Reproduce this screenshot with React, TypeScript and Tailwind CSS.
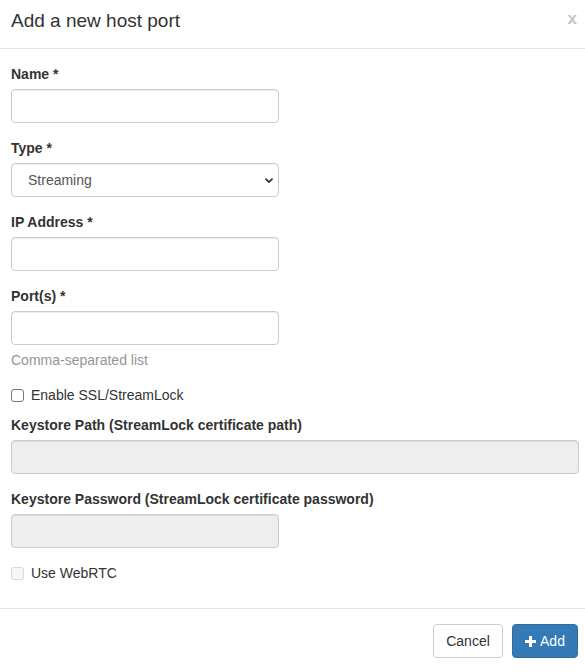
import React from 'react'

const inputBase =
  'block h-[34px] rounded-[4px] border border-[#ccc] px-3 text-[14px] text-[#555] shadow-[inset_0_1px_1px_rgba(0,0,0,0.075)] outline-none'

const Label = ({ children }: { children: React.ReactNode }) => (
  <label className="mb-[5px] block text-[14px] font-bold leading-[20px] text-[#333]">{children}</label>
)

const Check = ({ label, disabled }: { label: string; disabled?: boolean }) => (
  <div className="my-[10px] flex h-[20px] items-center">
    <span
      className={`mr-[7px] inline-block h-[13px] w-[13px] rounded-[3px] border ${
        disabled ? 'border-[#d9d9d9] bg-[#f7f7f7]' : 'border-[#767676] bg-white'
      }`}
    />
    <span className="text-[14px] leading-[20px] text-[#333]">{label}</span>
  </div>
)

const App = () => {
  return (
    <div
      className="h-[672px] w-[585px] overflow-hidden bg-white text-[#333]"
      style={{ fontFamily: '"Liberation Sans", Arial, sans-serif' }}
    >
      {/* header */}
      <div className="flex items-start justify-between border-b border-[#e5e5e5] pb-[14px] pl-[11px] pr-[8px] pt-[8px]">
        <h4 className="text-[19px] font-normal leading-[26px] text-[#333]">Add a new host port</h4>
        <button className="mt-[-2px] text-[17px] font-bold leading-[26px] text-[#c4c4c4]">x</button>
      </div>

      {/* body */}
      <div className="pb-[15px] pl-[11px] pr-[6px] pt-[15px]">
        <div className="mb-[15px]">
          <Label>Name *</Label>
          <input className={`${inputBase} w-[268px]`} />
        </div>

        <div className="mb-[15px]">
          <Label>Type *</Label>
          <div className="relative w-[268px]">
            <select className={`${inputBase} w-full appearance-none bg-white pl-[16px] text-[#333]`} defaultValue="Streaming">
              <option>Streaming</option>
              <option>Admin</option>
            </select>
            <svg
              className="pointer-events-none absolute right-[6px] top-[15px]"
              width="8"
              height="6"
              viewBox="0 0 8 6"
              fill="none"
            >
              <path d="M1 1.2l3 3 3-3" stroke="#333" strokeWidth="1.7" strokeLinecap="round" strokeLinejoin="round" />
            </svg>
          </div>
        </div>

        <div className="mb-[15px]">
          <Label>IP Address *</Label>
          <input className={`${inputBase} w-[268px]`} />
        </div>

        <div className="mb-[15px]">
          <Label>Port(s) *</Label>
          <input className={`${inputBase} w-[268px]`} />
          <p className="mt-[5px] text-[14px] leading-[20px] text-[#959595]">Comma-separated list</p>
        </div>

        <Check label="Enable SSL/StreamLock" />

        <div className="mb-[15px]">
          <Label>Keystore Path (StreamLock certificate path)</Label>
          <input disabled className={`${inputBase} w-full bg-[#eee]`} />
        </div>

        <div className="mb-[15px]">
          <Label>Keystore Password (StreamLock certificate password)</Label>
          <input disabled type="password" className={`${inputBase} w-[268px] bg-[#eee]`} />
        </div>

        <Check label="Use WebRTC" disabled />
      </div>

      {/* footer */}
      <div className="flex justify-end gap-[9px] border-t border-[#e5e5e5] pb-[15px] pr-[7px] pt-[15px]">
        <button className="h-[34px] w-[70px] rounded-[4px] border border-[#ccc] bg-white text-[14px] text-[#333]">
          Cancel
        </button>
        <button className="flex h-[34px] w-[66px] items-center justify-center gap-[4px] rounded-[4px] border border-[#2e6da4] bg-[#337ab7] text-[14px] text-white">
          <svg width="11" height="11" viewBox="0 0 11 11">
            <path d="M4 0h3v4h4v3H7v4H4V7H0V4h4z" fill="#fff" />
          </svg>
          Add
        </button>
      </div>
    </div>
  )
}

export default App
